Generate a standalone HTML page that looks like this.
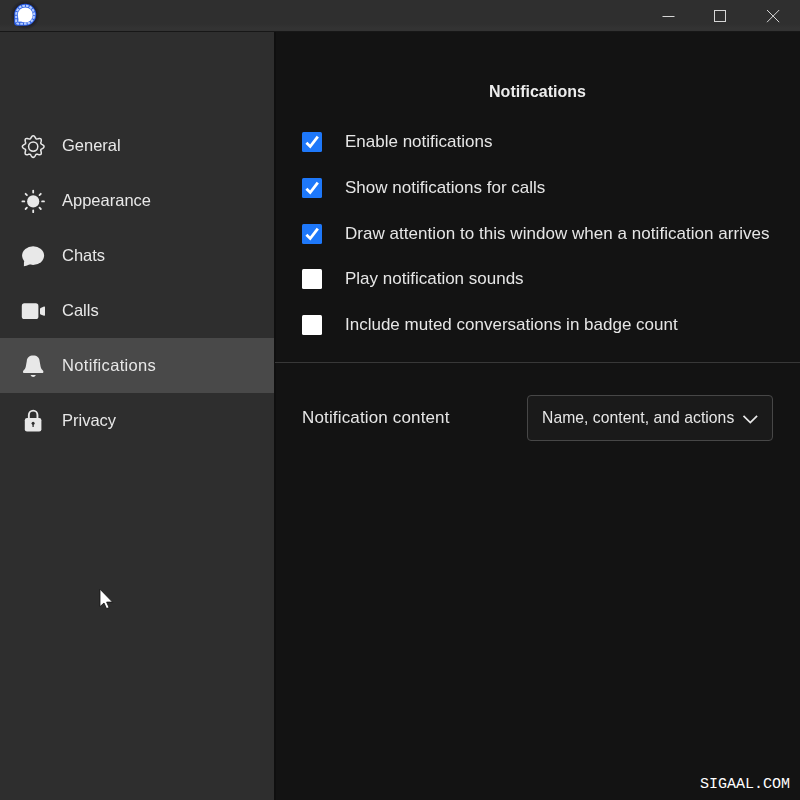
<!DOCTYPE html>
<html><head><meta charset="utf-8">
<style>
*{box-sizing:border-box;margin:0;padding:0}
html,body{width:800px;height:800px;overflow:hidden;background:#131313;font-family:"Liberation Sans",sans-serif;}
#title{position:absolute;left:0;top:0;width:800px;height:32px;background:linear-gradient(#2f2f2f 0,#2f2f2f 24px,#333 28px,#333 31px);border-bottom:1px solid #171717}
#side{position:absolute;left:0;top:32px;width:274px;height:768px;background:#2e2e2e}
#sideb{position:absolute;left:274px;top:32px;width:2px;height:768px;background:#0f0f0f}
#main{position:absolute;left:276px;top:32px;width:524px;height:768px;background:#131313}
.sel{position:absolute;left:0;top:338px;width:274px;height:55px;background:#494949}
.lbl{position:absolute;left:62px;font-size:16.5px;color:#e8e8e8;white-space:nowrap;line-height:20px}
.t{position:absolute;font-size:17px;color:#e6e6e6;white-space:nowrap;line-height:20px}
.cb{position:absolute;left:302px;width:20px;height:20px;border-radius:1.5px}
.cb.on{background:#1e78fa}
.cb.off{background:#fff}
svg.ov{position:absolute;left:0;top:0}
.t,.lbl{will-change:transform}
</style></head><body>
<div id="title"></div>
<div id="side"></div>
<div id="sideb"></div>
<div id="main"></div>
<div class="sel"></div>

<div class="lbl" style="top:135px">General</div>
<div class="lbl" style="top:190px">Appearance</div>
<div class="lbl" style="top:245px">Chats</div>
<div class="lbl" style="top:300px">Calls</div>
<div class="lbl" style="top:355px;letter-spacing:0.33px">Notifications</div>
<div class="lbl" style="top:410px">Privacy</div>

<div class="t" style="left:275px;width:525px;text-align:center;top:82.4px;font-weight:bold;font-size:16px;color:#ececec">Notifications</div>

<div class="cb on" style="top:132px"></div>
<div class="t" style="left:345px;top:132px">Enable notifications</div>
<div class="cb on" style="top:178px"></div>
<div class="t" style="left:345px;top:178px">Show notifications for calls</div>
<div class="cb on" style="top:224px"></div>
<div class="t" style="left:345px;top:224px;letter-spacing:0.04px">Draw attention to this window when a notification arrives</div>
<div class="cb off" style="top:269px"></div>
<div class="t" style="left:345px;top:269px">Play notification sounds</div>
<div class="cb off" style="top:315px"></div>
<div class="t" style="left:345px;top:315px">Include muted conversations in badge count</div>

<div style="position:absolute;left:275px;top:362px;width:525px;height:1px;background:#383838"></div>
<div class="t" style="left:302px;top:408px;letter-spacing:0.15px">Notification content</div>
<div style="position:absolute;left:527px;top:395px;width:246px;height:46px;border:1px solid #474747;border-radius:4px;background:#1a1a1a"></div>
<div class="t" style="left:542px;top:408px;font-size:15.7px;letter-spacing:0.05px">Name, content, and actions</div>

<div style="position:absolute;left:700px;top:776px;font-family:'Liberation Mono',monospace;font-size:15px;color:#fff">SIGAAL.COM</div>

<svg class="ov" width="800" height="800" viewBox="0 0 800 800">
  <!-- signal logo -->
  <defs><radialGradient id="halo"><stop offset="0.7" stop-color="#101020" stop-opacity="0.6"/><stop offset="1" stop-color="#101020" stop-opacity="0"/></radialGradient></defs>
  <circle cx="25.2" cy="14.8" r="15" fill="url(#halo)"/>
  <g>
    <path d="M14.2 14.7 A11 11 0 1 1 25.2 25.7 H17.4 Q14.2 25.7 14.2 22.5 Z" fill="#2a5ee6"/>
    <path d="M16.2 14.7 A9 9 0 1 1 25.2 23.7 H18.6 Q16.2 23.7 16.2 21.3 Z" fill="none" stroke="#b4ccff" stroke-width="2.1" stroke-dasharray="2.7 1"/>
    <circle cx="25.25" cy="14.9" r="7.5" fill="#fff"/>
    <path d="M18.5 17 L18.3 21.8 L22.5 21.5 Z" fill="#fff"/>
  </g>
  <!-- window controls -->
  <path d="M662.5 16.5 H674.5" stroke="#d6d6d6" stroke-width="1"/>
  <rect x="714.5" y="10.5" width="11" height="11" fill="none" stroke="#d6d6d6" stroke-width="1"/>
  <path d="M767 10 L779.2 22.2 M779.2 10 L767 22.2" stroke="#d6d6d6" stroke-width="1"/>

  <!-- gear -->
  <path d="M33.20 135.75 L33.76 135.88 L34.29 136.24 L34.76 136.77 L35.16 137.39 L35.50 138.00 L35.83 138.52 L36.17 138.87 L36.57 139.04 L37.06 139.03 L37.65 138.89 L38.33 138.70 L39.05 138.55 L39.76 138.50 L40.38 138.62 L40.87 138.93 L41.18 139.42 L41.30 140.04 L41.25 140.75 L41.10 141.47 L40.91 142.15 L40.77 142.74 L40.76 143.23 L40.93 143.63 L41.28 143.97 L41.80 144.30 L42.41 144.64 L43.03 145.04 L43.56 145.51 L43.92 146.04 L44.05 146.60 L43.92 147.16 L43.56 147.69 L43.03 148.16 L42.41 148.56 L41.80 148.90 L41.28 149.23 L40.93 149.57 L40.76 149.97 L40.77 150.46 L40.91 151.05 L41.10 151.73 L41.25 152.45 L41.30 153.16 L41.18 153.78 L40.87 154.27 L40.38 154.58 L39.76 154.70 L39.05 154.65 L38.33 154.50 L37.65 154.31 L37.06 154.17 L36.57 154.16 L36.17 154.33 L35.83 154.68 L35.50 155.20 L35.16 155.81 L34.76 156.43 L34.29 156.96 L33.76 157.32 L33.20 157.45 L32.64 157.32 L32.11 156.96 L31.64 156.43 L31.24 155.81 L30.90 155.20 L30.57 154.68 L30.23 154.33 L29.83 154.16 L29.34 154.17 L28.75 154.31 L28.07 154.50 L27.35 154.65 L26.64 154.70 L26.02 154.58 L25.53 154.27 L25.22 153.78 L25.10 153.16 L25.15 152.45 L25.30 151.73 L25.49 151.05 L25.63 150.46 L25.64 149.97 L25.47 149.57 L25.12 149.23 L24.60 148.90 L23.99 148.56 L23.37 148.16 L22.84 147.69 L22.48 147.16 L22.35 146.60 L22.48 146.04 L22.84 145.51 L23.37 145.04 L23.99 144.64 L24.60 144.30 L25.12 143.97 L25.47 143.63 L25.64 143.23 L25.63 142.74 L25.49 142.15 L25.30 141.47 L25.15 140.75 L25.10 140.04 L25.22 139.42 L25.53 138.93 L26.02 138.62 L26.64 138.50 L27.35 138.55 L28.07 138.70 L28.75 138.89 L29.34 139.03 L29.83 139.04 L30.23 138.87 L30.57 138.52 L30.90 138.00 L31.24 137.39 L31.64 136.77 L32.11 136.24 L32.64 135.88 L33.20 135.75Z" fill="none" stroke="#e8e8e8" stroke-width="1.5" stroke-linejoin="round"/>
  <circle cx="33.2" cy="146.6" r="4.6" fill="none" stroke="#e8e8e8" stroke-width="1.5"/>
  <!-- sun -->
  <circle cx="33.2" cy="201.4" r="6.1" fill="#e8e8e8"/>
  <g stroke="#e8e8e8" stroke-width="1.8" stroke-linecap="round">
    <path d="M33.2 190.6 V192.5 M33.2 210.3 V212.2 M22.4 201.4 H24.3 M42.1 201.4 H44"/>
    <path d="M25.6 193.8 L26.9 195.1 M40.8 193.8 L39.5 195.1 M25.6 209 L26.9 207.7 M40.8 209 L39.5 207.7"/>
  </g>
  <!-- chat -->
  <ellipse cx="33.1" cy="255.6" rx="11" ry="9.3" fill="#e8e8e8"/>
  <path d="M24 261 L23.9 266.2 Q25 266.4 30.5 264 Z" fill="#e8e8e8"/>
  <!-- camera -->
  <rect x="21.8" y="303.3" width="16.6" height="15.8" rx="2.6" fill="#e8e8e8"/>
  <path d="M40 309 Q40 308.3 40.6 308 L44 306.6 Q45 306.3 45 307.3 V315 Q45 316 44 315.7 L40.6 314.4 Q40 314.1 40 313.4 Z" fill="#e8e8e8"/>
  <!-- bell -->
  <path d="M33.2 355.5 C29.5 355.5 27 357.5 26.8 361 L25.8 366.5 C25.5 368.5 24.5 369.5 23.3 370.8 Q22.8 371.5 23.1 372.4 Q23.4 373.1 24.3 373.1 H42.1 Q43 373.1 43.3 372.4 Q43.6 371.5 43.1 370.8 C41.9 369.5 40.9 368.5 40.6 366.5 L39.6 361 C39.4 357.5 36.9 355.5 33.2 355.5 Z" fill="#e8e8e8"/>
  <path d="M30.5 375 H35.9 Q35 377 33.2 377 Q31.4 377 30.5 375 Z" fill="#e8e8e8"/>
  <!-- lock -->
  <path d="M28.85 418.5 V414.9 A4.3 4.3 0 0 1 37.45 414.9 V418.5" fill="none" stroke="#e8e8e8" stroke-width="1.9"/>
  <rect x="24.8" y="418" width="16.6" height="13.5" rx="2.2" fill="#e8e8e8"/>
  <circle cx="33.1" cy="423.3" r="1.5" fill="#2e2e2e"/>
  <path d="M32.35 423.5 H33.85 L33.7 427 H32.5 Z" fill="#2e2e2e"/>

  <!-- checkmarks -->
  <g fill="none" stroke="#fff" stroke-width="2.8" stroke-linejoin="miter">
    <path d="M306.4 142.8 L310.2 146.5 L317.8 136.6"/>
    <path d="M306.4 188.8 L310.2 192.5 L317.8 182.6"/>
    <path d="M306.4 234.8 L310.2 238.5 L317.8 228.6"/>
  </g>
  <!-- chevron -->
  <path d="M743.5 415.8 L750.3 422.6 L757.1 415.8" fill="none" stroke="#e8e8e8" stroke-width="1.7"/>
  <!-- cursor -->
  <path d="M100 589.2 V606.6 L104 603 L106.5 608.6 L109.1 607.6 L106.6 602.1 L112.5 602.1 Z" fill="#fff" stroke="#111" stroke-width="0.8" stroke-linejoin="round"/>
</svg>
</body></html>
